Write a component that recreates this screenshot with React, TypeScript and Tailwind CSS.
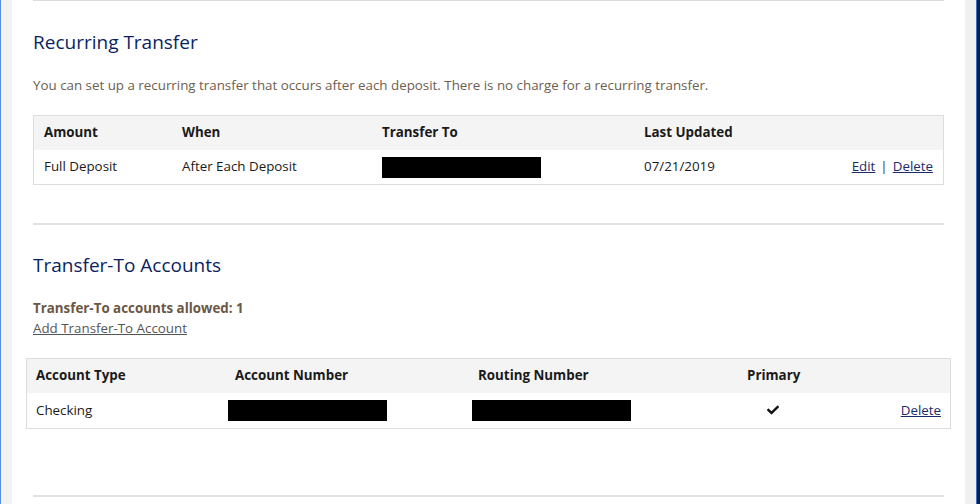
import { FaCheck } from 'react-icons/fa'

const font = { fontFamily: '"Open Sans", "Liberation Sans", sans-serif' }

function Redacted() {
  return <span className="block w-[159px] h-[21px] bg-black" />
}

export default function App() {
  return (
    <div className="flex h-[504px] w-[980px] overflow-hidden bg-white" style={font}>
      <div className="w-px bg-[#5a8fe0]" />
      <div className="w-[11px] bg-[#f2f2f2]" />

      <main className="flex-1 px-[21px] text-[13.35px]">
        <div className="h-px bg-[#dcdcdc]" />

        {/* Recurring transfer */}
        <h2 className="mt-[27px] text-[19px] leading-[28px] text-[#0c1f5e]">Recurring Transfer</h2>
        <p className="mt-[19px] leading-[20px] text-[#6d5e50]">
          You can set up a recurring transfer that occurs after each deposit. There is no charge for a recurring transfer.
        </p>

        <div className="mt-[20px] border border-[#dddddd] text-[#1a1a1a]">
          <div className="grid h-[34px] grid-cols-[138px_200px_262px_1fr] items-center bg-[#f4f4f4] pb-[2px] pl-[10px] pr-[10px] font-bold">
            <span>Amount</span>
            <span>When</span>
            <span>Transfer To</span>
            <span>Last Updated</span>
          </div>
          <div className="grid h-[34px] grid-cols-[138px_200px_262px_1fr] items-center pl-[10px] pr-[10px]">
            <span className="-mt-[1px]">Full Deposit</span>
            <span className="-mt-[1px]">After Each Deposit</span>
            <Redacted />
            <div className="-mt-[1px] flex justify-between">
              <span>07/21/2019</span>
              <span className="text-[#1b2a6b]">
                <a className="underline">Edit</a>
                <span className="mx-[5px] text-[#333]">|</span>
                <a className="underline">Delete</a>
              </span>
            </div>
          </div>
        </div>

        <div className="mt-[38px] h-[2px] bg-[#e2e2e2]" />

        {/* Transfer-to accounts */}
        <h2 className="mt-[26px] text-[19px] leading-[28px] text-[#0c1f5e]">Transfer-To Accounts</h2>
        <p className="mt-[19px] font-bold leading-[20px] text-[#6b5744]">Transfer-To accounts allowed: 1</p>
        <a className="block leading-[20px] text-[#555] underline">Add Transfer-To Account</a>

        <div className="mx-[-7px] mt-[20px] border border-[#dddddd] text-[#1a1a1a]">
          <div className="grid h-[34px] grid-cols-[199px_243px_269px_1fr] items-center bg-[#f4f4f4] pb-[2px] pl-[9px] pr-[9px] font-bold">
            <span>Account Type</span>
            <span>Account Number</span>
            <span>Routing Number</span>
            <span>Primary</span>
          </div>
          <div className="grid h-[35px] grid-cols-[192px_244px_275px_1fr] items-center pl-[9px] pr-[9px]">
            <span>Checking</span>
            <Redacted />
            <Redacted />
            <div className="flex items-center justify-between">
              <FaCheck className="ml-[20px] text-[12px] text-[#111]" />
              <a className="text-[#1b2a6b] underline">Delete</a>
            </div>
          </div>
        </div>

        <div className="mt-[66px] h-[2px] bg-[#e2e2e2]" />
      </main>

      <div className="w-[11px] bg-[#f0f0f0]" />
      <div className="w-px bg-[#3b6fc4]" />
      <div className="w-[3px] bg-[#0b1d42]" />
    </div>
  )
}
